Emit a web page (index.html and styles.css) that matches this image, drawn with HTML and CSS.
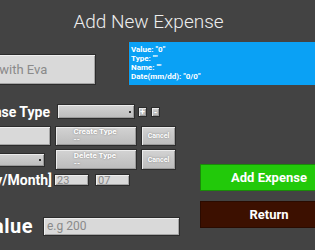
FILE: index.html
```html
<!DOCTYPE html>
<html>
<head>
  <title>Add New Expense</title>
  <link rel="stylesheet" href="styles.css">
</head>
<body>
  <div class="page">
    <h1 class="title">Add New Expense</h1>

    <!-- name + summary -->
    <div class="top-row">
      <input class="field name-field" type="text" placeholder="Lunch with Eva">
      <div class="summary">
        Value: "0"<br>
        Type: ""<br>
        Name: ""<br>
        Date(mm/dd): "0/0"
      </div>
    </div>

    <div class="main">
      <div class="form">
        <!-- expense type -->
        <div class="row row-type">
          <div class="label"><span>Expense Type</span></div>
          <div class="select type-select"><span class="dot"></span></div>
          <button class="btn tiny">+</button>
          <button class="btn tiny">-</button>
        </div>

        <!-- create type -->
        <div class="row row-create">
          <input class="field new-type" type="text">
          <button class="btn wide"><span>Create Type<br>--</span></button>
          <button class="btn cancel">Cancel</button>
        </div>

        <!-- delete type -->
        <div class="row row-delete">
          <div class="select delete-select"><span class="dot"></span></div>
          <button class="btn wide"><span>Delete Type<br>--</span></button>
          <button class="btn cancel">Cancel</button>
        </div>

        <!-- date -->
        <div class="row row-date">
          <div class="label"><span>[Day/Month]</span></div>
          <input class="field small" type="text" value="23">
          <input class="field small" type="text" value="07">
        </div>

        <!-- value -->
        <div class="row row-value">
          <div class="label value-label"><span>Value</span></div>
          <input class="field value-field" type="text" placeholder="e.g 200">
        </div>
      </div>

      <div class="actions">
        <button class="action add">Add Expense</button>
        <button class="action back">Return</button>
      </div>
    </div>
  </div>
</body>
</html>
```

FILE: styles.css
```css
body {
  margin: 0;
  background-color: #434343;
  font-family: Roboto, "Liberation Sans", sans-serif;
}
.page {
  width: 315px;
  height: 250px;
  overflow: hidden;
}
.title {
  margin: 0;
  height: 42px;
  box-sizing: border-box;
  padding: 9px 18px 0 0;
  text-align: center;
  font-size: 19px;
  line-height: 26px;
  font-weight: 300;
  color: #eeeeee;
}

/* top row */
.top-row {
  display: flex;
  align-items: flex-end;
  gap: 32px;
}
.field {
  box-sizing: border-box;
  flex-shrink: 0;
  margin: 0;
  background-color: #d9d9d9;
  border: 1px solid #2c2c2c;
  box-shadow: inset 1px 1px 0 #efefef, inset -1px -1px 0 #a5a5a5;
  font-family: Roboto, "Liberation Sans", sans-serif;
  color: #8a8a8a;
  outline: none;
}
.field::placeholder {
  color: #8a8a8a;
}
.name-field {
  width: 140px;
  height: 31px;
  margin-left: -44px;
  padding: 0 4px;
  font-size: 13px;
}
.summary {
  flex: 0 0 200px;
  height: 43px;
  box-sizing: border-box;
  padding: 3px 2px;
  background-color: #0aa1f5;
  border-left: 1px solid #5a3a22;
  color: #ffffff;
  font-size: 8px;
  line-height: 9px;
  font-weight: bold;
}

/* lower part */
.main {
  display: flex;
  margin-top: 19px;
}
.form {
  flex: 0 0 200px;
  min-width: 0;
}
.row {
  display: flex;
  align-items: center;
}
.label {
  flex: 0 0 50px;
  min-width: 0;
  display: flex;
  justify-content: flex-end;
  white-space: nowrap;
  color: #ffffff;
  font-size: 14px;
  font-weight: bold;
}
.label span {
  flex-shrink: 0;
}
.row-type {
  height: 15px;
  gap: 3px;
}
.type-select {
  margin-left: 4px;
  width: 78px;
}
.row-create {
  margin-top: 7px;
  gap: 4px;
}
.row-delete {
  margin-top: 3px;
  gap: 4px;
}
.row-date {
  margin-top: 4px;
  height: 12px;
  gap: 6px;
}
.row-date .label {
  flex-basis: 52px;
  margin-right: -4px;
}
.row-value {
  margin-top: 28px;
}
.value-label {
  flex-basis: 33px;
  margin-right: 10px;
  font-size: 20px;
  letter-spacing: 0.5px;
}

/* gray controls */
.select,
.btn {
  box-sizing: border-box;
  flex-shrink: 0;
  background: linear-gradient(#d3d3d3, #bcbcbc);
  border: 1px solid #2c2c2c;
  box-shadow: inset 1px 1px 0 #ececec, inset -1px -1px 0 #9a9a9a;
}
.select {
  height: 15px;
  display: flex;
  align-items: center;
  justify-content: flex-end;
  padding-right: 3px;
}
.dot {
  width: 2px;
  height: 2px;
  background-color: #333333;
}
.delete-select {
  width: 56px;
  height: 14px;
  margin-left: -11px;
  margin-right: 6px;
}
.btn {
  margin: 0;
  padding: 0;
  color: #ffffff;
  text-shadow: 0 0 2px #7a7a7a;
  font-family: Roboto, "Liberation Sans", sans-serif;
  font-weight: bold;
}
.tiny {
  width: 9px;
  height: 10px;
  font-size: 9px;
  line-height: 8px;
}
.tiny + .tiny {
  margin-left: 1px;
}
.wide {
  width: 82px;
  height: 20px;
  font-size: 8px;
  line-height: 8px;
}
.wide span {
  display: inline-block;
  text-align: left;
  margin-right: 2px;
}
.cancel {
  width: 35px;
  height: 20px;
  font-size: 7px;
}
.row-delete .wide,
.row-delete .cancel {
  height: 21px;
}
.new-type {
  width: 60px;
  height: 20px;
  margin-left: -9px;
}
.small {
  width: 35px;
  height: 12px;
  padding: 0 2px;
  font-size: 11px;
}
.value-field {
  width: 137px;
  height: 19px;
  padding: 0 3px;
  font-size: 12px;
}

/* right buttons */
.actions {
  display: flex;
  flex-direction: column;
  gap: 10px;
  padding-top: 60px;
}
.action {
  flex-shrink: 0;
  width: 138px;
  height: 27px;
  margin: 0;
  padding: 0;
  font-family: Roboto, "Liberation Sans", sans-serif;
  font-size: 13px;
  font-weight: bold;
  color: #ffffff;
}
.add {
  background-color: #22c90a;
  border: 1px solid #1a8a08;
}
.back {
  background-color: #3c1000;
  border: 1px solid #2a0b00;
}
```
